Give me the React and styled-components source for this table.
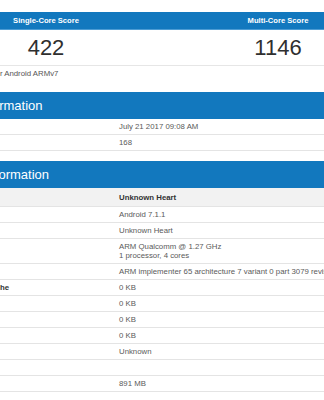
import styled, { createGlobalStyle } from "styled-components";


const GlobalStyle = createGlobalStyle`
    html, body {
        margin: 0;
        padding: 0;
        background: #ffffff;
        overflow: hidden;
    }

    body {
        font-family: "Liberation Sans", Arial, sans-serif;
        color: #333333;
    }
`;

const BLUE = "#1278be";

// the page is scrolled sideways, so its left edge sits off screen
const Page = styled.div`
    width: 486px;
    margin-left: -92px;
    padding-top: 12px;
`;

const Block = styled.div`
    margin-left: 22px;
`;

const ScoreHead = styled.div`
    display: grid;
    grid-template-columns: 1fr 1fr;
    align-items: center;

    height: 18px;
    background: ${BLUE};
    border-bottom: 1px solid #4c9cd4;
    box-sizing: border-box;
`;

const HeadCell = styled.div`
    text-align: center;
    color: #ffffff;
    font-weight: bold;
    font-size: 7.6px;
`;

const ScoreRow = styled.div`
    display: grid;
    grid-template-columns: 1fr 1fr;
    align-items: center;

    height: 35px;
    border-bottom: 1px solid #e6e6e6;
`;

const Score = styled.div`
    text-align: center;
    font-size: 22px;
    color: #2f2f2f;
`;

const Footnote = styled.p`
    margin: 0 0 10px;

    font-size: 7.8px;
    line-height: 16px;
    color: #555555;
    white-space: nowrap;
`;

const Section = styled.section`
    margin-bottom: 10px;
`;

const SectionTitle = styled.h2`
    margin: 0;
    padding-left: 7px;

    height: 27px;
    line-height: 27px;

    background: ${BLUE};
    color: #ffffff;
    font-size: 13px;
    font-weight: normal;
`;

const Row = styled.div`
    display: grid;
    grid-template-columns: 187px 1fr;

    border-bottom: 1px solid #e4e4e4;
    background: ${({ $head }) => ($head ? "#f2f2f2" : "#ffffff")};
`;

const Label = styled.div`
    padding: ${({ $head }) => ($head ? "5px 2px 4px" : "3px 2px")};

    font-size: 7.8px;
    line-height: 9px;
    font-weight: bold;
    color: #333333;
    white-space: nowrap;
`;

const Value = styled.div`
    padding: ${({ $head }) => ($head ? "5px 2px 4px" : "3px 2px")};

    font-size: 7.8px;
    line-height: 9px;
    font-weight: ${({ $head }) => ($head ? "bold" : "normal")};
    color: ${({ $head }) => ($head ? "#333333" : "#5a5a5a")};
    white-space: nowrap;
`;


const resultInfo = [
    ["Upload Date", "July 21 2017 09:08 AM"],
    ["Views", "168"],
];

const systemInfo = [
    ["Operating System", "Android 7.1.1"],
    ["Model", "Unknown Heart"],
    ["Processor", "ARM Qualcomm @ 1.27 GHz", "1 processor, 4 cores"],
    ["Processor ID", "ARM implementer 65 architecture 7 variant 0 part 3079 revision 4"],
    ["L1 Instruction Cache", "0 KB"],
    ["L1 Data Cache", "0 KB"],
    ["L2 Cache", "0 KB"],
    ["L3 Cache", "0 KB"],
    ["Motherboard", "Unknown"],
    ["BIOS", ""],
    ["Memory", "891 MB"],
];


function InfoRow({ label, lines, head }) {
    return (
        <Row $head={head}>
            <Label $head={head}>{label}</Label>
            <Value $head={head}>
                {lines.map((line, i) => (
                    <div key={i}>{line || "\u00a0"}</div>
                ))}
            </Value>
        </Row>
    );
}


function App() {
    return (
        <>
            <GlobalStyle />
            <Page>

                <Block>
                    <ScoreHead>
                        <HeadCell>Single-Core Score</HeadCell>
                        <HeadCell>Multi-Core Score</HeadCell>
                    </ScoreHead>

                    <ScoreRow>
                        <Score>422</Score>
                        <Score>1146</Score>
                    </ScoreRow>
                </Block>

                <Footnote>
                    Geekbench 4.1.0 Tryout for Android ARMv7
                </Footnote>

                <Block>
                    <Section>
                        <SectionTitle>Result Information</SectionTitle>
                        {resultInfo.map(([label, ...lines]) => (
                            <InfoRow key={label} label={label} lines={lines} />
                        ))}
                    </Section>

                    <Section>
                        <SectionTitle>System Information</SectionTitle>
                        <InfoRow head label="" lines={["Unknown Heart"]} />
                        {systemInfo.map(([label, ...lines]) => (
                            <InfoRow key={label} label={label} lines={lines} />
                        ))}
                    </Section>
                </Block>

            </Page>
        </>
    );
}

export default App;
